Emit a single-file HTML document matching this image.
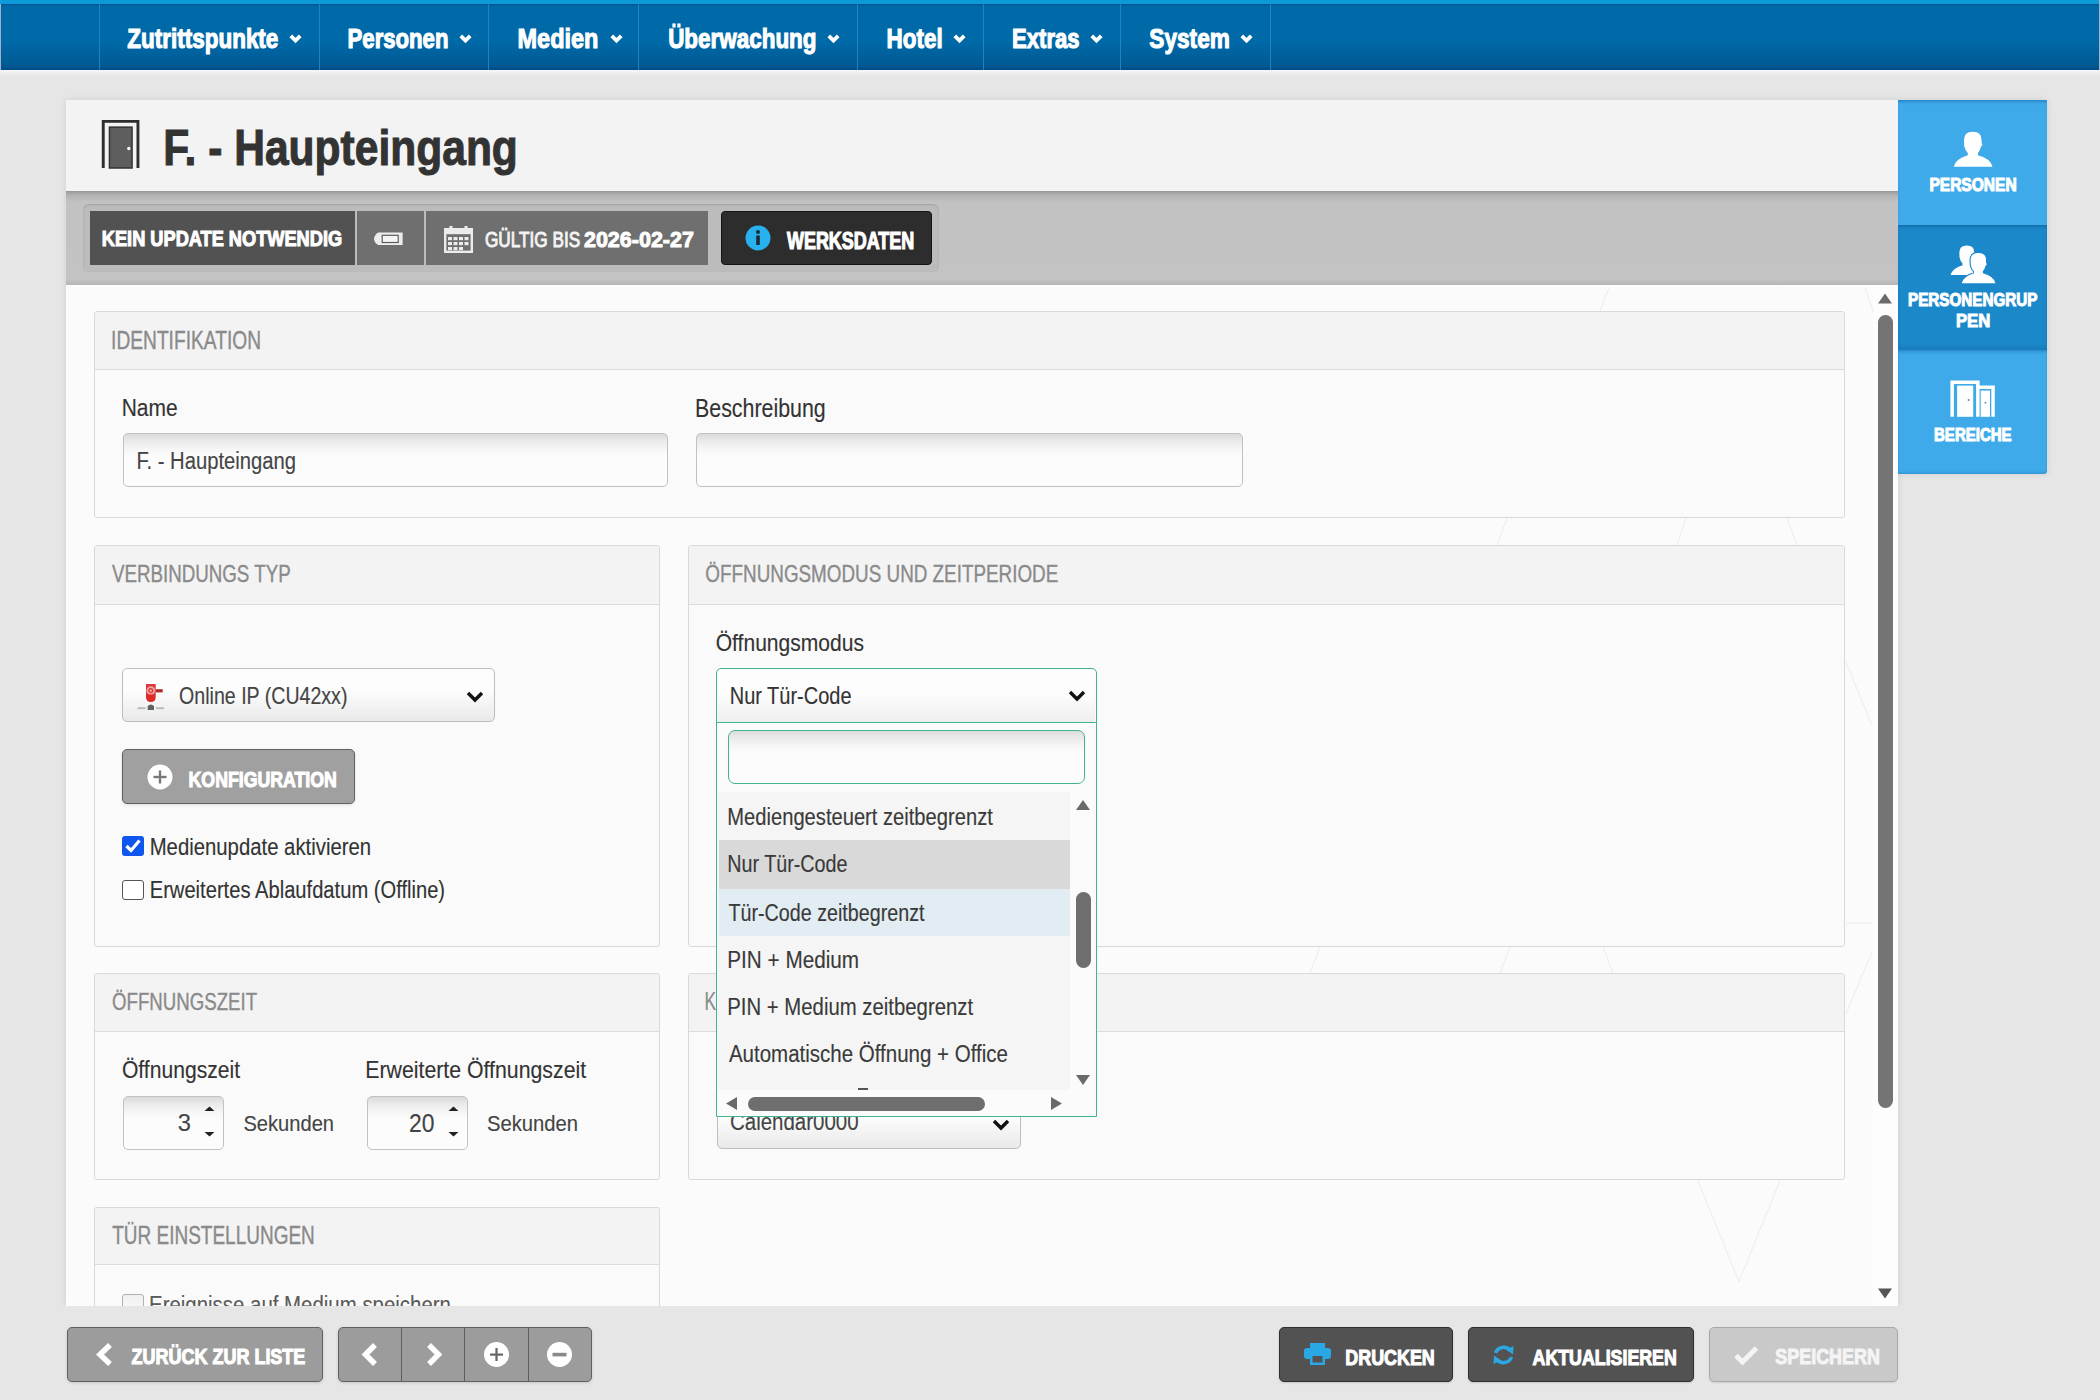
<!DOCTYPE html><html><head><meta charset="utf-8"><style>
html,body{margin:0;padding:0;}
body{width:2100px;height:1400px;position:relative;overflow:hidden;background:#e6e6e6;font-family:"Liberation Sans",sans-serif;}
.t{position:absolute;white-space:nowrap;transform-origin:0 0;}
svg{position:absolute;overflow:visible;}
</style></head><body>
<div style="position:absolute;left:0px;top:0px;width:2100px;height:4px;background:#0d9ad9;"></div>
<div style="position:absolute;left:0px;top:4px;width:2100px;height:66px;background:linear-gradient(#00508c,#006aa8 2px,#0069a7 38px,#005b95 60px,#004c87 66.5px,#00195e 68px,#001a5e);"></div>
<div style="position:absolute;left:2099px;top:0px;width:1px;height:70px;background:#aab2c4;"></div>
<div style="position:absolute;left:0px;top:4px;width:1px;height:66px;background:#9fb0c8;"></div>
<div style="position:absolute;left:0px;top:70px;width:2100px;height:6px;background:linear-gradient(#f7f7f7,#e6e6e6);"></div>
<div style="position:absolute;left:99px;top:4px;width:1px;height:66px;background:#2a8bc8;opacity:.8;"></div>
<div style="position:absolute;left:319px;top:4px;width:1px;height:66px;background:#2a8bc8;opacity:.8;"></div>
<div style="position:absolute;left:488px;top:4px;width:1px;height:66px;background:#2a8bc8;opacity:.8;"></div>
<div style="position:absolute;left:638px;top:4px;width:1px;height:66px;background:#2a8bc8;opacity:.8;"></div>
<div style="position:absolute;left:857px;top:4px;width:1px;height:66px;background:#2a8bc8;opacity:.8;"></div>
<div style="position:absolute;left:983px;top:4px;width:1px;height:66px;background:#2a8bc8;opacity:.8;"></div>
<div style="position:absolute;left:1120px;top:4px;width:1px;height:66px;background:#2a8bc8;opacity:.8;"></div>
<div style="position:absolute;left:1270px;top:4px;width:1px;height:66px;background:#2a8bc8;opacity:.8;"></div>
<svg style="left:120px;top:18px" width="170" height="41"><text transform="translate(7.33,29.50) scale(0.8062,1)" font-size="27.88" font-weight="bold" fill="#fff" stroke="#fff" stroke-width="1.116" style="font-family:&quot;Liberation Sans&quot;,sans-serif;">Zutrittspunkte</text></svg>
<svg style="left:289px;top:34px" width="13" height="10" viewBox="0 0 13 10"><path d="M1.8 1.8 L6.5 6.5 L11.2 1.8" stroke="#fff" stroke-width="3.8" fill="none"/></svg>
<svg style="left:341px;top:18px" width="119" height="41"><text transform="translate(6.56,29.50) scale(0.7949,1)" font-size="27.86" font-weight="bold" fill="#fff" stroke="#fff" stroke-width="1.132" style="font-family:&quot;Liberation Sans&quot;,sans-serif;">Personen</text></svg>
<svg style="left:459px;top:34px" width="13" height="10" viewBox="0 0 13 10"><path d="M1.8 1.8 L6.5 6.5 L11.2 1.8" stroke="#fff" stroke-width="3.8" fill="none"/></svg>
<svg style="left:511px;top:18px" width="99" height="41"><text transform="translate(6.47,29.50) scale(0.8416,1)" font-size="27.95" font-weight="bold" fill="#fff" stroke="#fff" stroke-width="1.069" style="font-family:&quot;Liberation Sans&quot;,sans-serif;">Medien</text></svg>
<svg style="left:609.5px;top:34px" width="13" height="10" viewBox="0 0 13 10"><path d="M1.8 1.8 L6.5 6.5 L11.2 1.8" stroke="#fff" stroke-width="3.8" fill="none"/></svg>
<svg style="left:661px;top:18px" width="166" height="41"><text transform="translate(7.15,29.50) scale(0.8053,1)" font-size="27.88" font-weight="bold" fill="#fff" stroke="#fff" stroke-width="1.118" style="font-family:&quot;Liberation Sans&quot;,sans-serif;">Überwachung</text></svg>
<svg style="left:827px;top:34px" width="13" height="10" viewBox="0 0 13 10"><path d="M1.8 1.8 L6.5 6.5 L11.2 1.8" stroke="#fff" stroke-width="3.8" fill="none"/></svg>
<svg style="left:880px;top:18px" width="74" height="41"><text transform="translate(6.54,29.50) scale(0.8053,1)" font-size="27.88" font-weight="bold" fill="#fff" stroke="#fff" stroke-width="1.118" style="font-family:&quot;Liberation Sans&quot;,sans-serif;">Hotel</text></svg>
<svg style="left:953px;top:34px" width="13" height="10" viewBox="0 0 13 10"><path d="M1.8 1.8 L6.5 6.5 L11.2 1.8" stroke="#fff" stroke-width="3.8" fill="none"/></svg>
<svg style="left:1005px;top:18px" width="86" height="41"><text transform="translate(7.07,29.50) scale(0.7923,1)" font-size="27.85" font-weight="bold" fill="#fff" stroke="#fff" stroke-width="1.136" style="font-family:&quot;Liberation Sans&quot;,sans-serif;">Extras</text></svg>
<svg style="left:1090px;top:34px" width="13" height="10" viewBox="0 0 13 10"><path d="M1.8 1.8 L6.5 6.5 L11.2 1.8" stroke="#fff" stroke-width="3.8" fill="none"/></svg>
<svg style="left:1142px;top:18px" width="99" height="41"><text transform="translate(7.32,29.50) scale(0.8120,1)" font-size="27.89" font-weight="bold" fill="#fff" stroke="#fff" stroke-width="1.108" style="font-family:&quot;Liberation Sans&quot;,sans-serif;">System</text></svg>
<svg style="left:1240px;top:34px" width="13" height="10" viewBox="0 0 13 10"><path d="M1.8 1.8 L6.5 6.5 L11.2 1.8" stroke="#fff" stroke-width="3.8" fill="none"/></svg>
<div style="position:absolute;left:66px;top:100px;width:1832px;height:1206px;box-shadow:0 0 7px rgba(0,0,0,.10);"></div>
<div style="position:absolute;left:1898px;top:100px;width:149px;height:374px;box-shadow:0 0 7px rgba(0,0,0,.10);"></div>
<div style="position:absolute;left:66px;top:100px;width:1832px;height:91px;background:#f3f3f3;"></div>
<div style="position:absolute;left:66px;top:191px;width:1832px;height:94px;background:linear-gradient(#979797,#b2b2b2 4px,#c2c2c2 11px,#c3c3c3 88px,#b6b6b6 94px);"></div>
<div style="position:absolute;left:66px;top:285px;width:1832px;height:1021px;background:#fbfbfb;"></div>
<div style="position:absolute;left:1873px;top:285px;width:25px;height:1021px;background:#fdfdfd;"></div>
<svg style="left:0;top:0" width="2100" height="1400"><line x1="1608.6" y1="288.6" x2="1600" y2="311" stroke="#ececec" stroke-width="1"/><line x1="1865" y1="288" x2="1873" y2="311" stroke="#ececec" stroke-width="1"/><line x1="1507" y1="518" x2="1497" y2="545" stroke="#ececec" stroke-width="1"/><line x1="1686" y1="518" x2="1677" y2="545" stroke="#ececec" stroke-width="1"/><line x1="1787" y1="518" x2="1797" y2="545" stroke="#ececec" stroke-width="1"/><line x1="1846" y1="662.5" x2="1872" y2="725" stroke="#ececec" stroke-width="1"/><line x1="1846" y1="923" x2="1872" y2="923" stroke="#ececec" stroke-width="1"/><line x1="1846" y1="1014" x2="1872" y2="952" stroke="#ececec" stroke-width="1"/><line x1="1320" y1="947" x2="1310" y2="973" stroke="#ececec" stroke-width="1"/><line x1="1510" y1="947" x2="1500" y2="973" stroke="#ececec" stroke-width="1"/><line x1="1603" y1="947" x2="1613" y2="973" stroke="#ececec" stroke-width="1"/><line x1="1697.6" y1="1180" x2="1739" y2="1281.7" stroke="#ececec" stroke-width="1"/><line x1="1739" y1="1281.7" x2="1780.2" y2="1180" stroke="#ececec" stroke-width="1"/></svg>
<svg style="left:100px;top:119px" width="42" height="50" viewBox="0 0 42 50"><path d="M3.25 49 V2.35 H37.95 V49" stroke="#2e2e2e" stroke-width="2.9" fill="none"/><rect x="9.45" y="8.15" width="22.6" height="40.85" fill="#5e5e5e" stroke="#333" stroke-width="1.5"/><circle cx="28.8" cy="29.5" r="1.7" fill="#f4f4f4"/></svg>
<svg style="left:158px;top:112px" width="370" height="75"><text transform="translate(5.23,53.00) scale(0.8504,1)" font-size="50.06" font-weight="bold" fill="#333" stroke="#333" stroke-width="1.058" style="font-family:&quot;Liberation Sans&quot;,sans-serif;">F. - Haupteingang</text></svg>
<div style="position:absolute;left:83px;top:204px;width:856px;height:68px;border-radius:6px;background:#bcbcbc;box-shadow:inset 0 1px 2px rgba(0,0,0,.15);"></div>
<div style="position:absolute;left:90px;top:211px;width:265px;height:54px;background:#525252;"></div>
<div style="position:absolute;left:357px;top:211px;width:67px;height:54px;background:#6f6f6f;"></div>
<div style="position:absolute;left:426px;top:211px;width:282px;height:54px;background:#6f6f6f;"></div>
<div style="position:absolute;left:721px;top:211px;width:211px;height:54px;box-sizing:border-box;border:1px solid #141414;background:#2d2d2d;border-radius:4px;"></div>
<svg style="left:95px;top:222px" width="259" height="34"><text transform="translate(6.82,24.20) scale(0.7993,1)" font-size="22.78" font-weight="bold" fill="#fff" stroke="#fff" stroke-width="1.126" style="font-family:&quot;Liberation Sans&quot;,sans-serif;">KEIN UPDATE NOTWENDIG</text></svg>
<svg style="left:373px;top:232px" width="31" height="15" viewBox="0 0 31 15"><path d="M1 6.9 Q1.3 3.2 5.2 0.6 H29.6 V13.1 H5.2 Q1.3 10.6 1 6.9 Z" fill="#ececec"/><rect x="9.2" y="3.3" width="16" height="7.2" fill="#f4f4f4" stroke="#5a5a5a" stroke-width="1.2"/></svg>
<svg style="left:444px;top:226px" width="29" height="27" viewBox="0 0 29 27"><rect x="1.2" y="3.2" width="26.6" height="22.6" fill="none" stroke="#ececec" stroke-width="2.4"/><rect x="1.2" y="3.2" width="26.6" height="5" fill="#ececec"/><rect x="5.5" y="0" width="3" height="5" fill="#ececec"/><rect x="20.5" y="0" width="3" height="5" fill="#ececec"/><rect x="4.0" y="11" width="4" height="3.2" fill="#ececec"/><rect x="9.5" y="11" width="4" height="3.2" fill="#ececec"/><rect x="15.0" y="11" width="4" height="3.2" fill="#ececec"/><rect x="20.5" y="11" width="4" height="3.2" fill="#ececec"/><rect x="4.0" y="16" width="4" height="3.2" fill="#ececec"/><rect x="9.5" y="16" width="4" height="3.2" fill="#ececec"/><rect x="15.0" y="16" width="4" height="3.2" fill="#ececec"/><rect x="20.5" y="16" width="4" height="3.2" fill="#ececec"/><rect x="4.0" y="21" width="4" height="3.2" fill="#ececec"/><rect x="9.5" y="21" width="4" height="3.2" fill="#ececec"/><rect x="15.0" y="21" width="4" height="3.2" fill="#ececec"/></svg>
<svg style="left:477px;top:222px" width="114" height="34"><text transform="translate(7.94,24.80) scale(0.7587,1)" font-size="22.69" font-weight="normal" fill="#f4f4f4" stroke="#f4f4f4" stroke-width="0.989" style="font-family:&quot;Liberation Sans&quot;,sans-serif;">GÜLTIG BIS</text></svg>
<svg style="left:576px;top:222px" width="129" height="34"><text transform="translate(7.95,24.80) scale(0.9456,1)" font-size="22.74" font-weight="bold" fill="#fff" stroke="#fff" stroke-width="0.952" style="font-family:&quot;Liberation Sans&quot;,sans-serif;">2026-02-27</text></svg>
<svg style="left:745px;top:225px" width="26" height="26" viewBox="0 0 26 26"><circle cx="13" cy="13" r="12.5" fill="#27b1ee"/><rect x="11.2" y="10.5" width="3.6" height="9.5" fill="#1e2b36"/><circle cx="13" cy="7" r="2" fill="#1e2b36"/></svg>
<svg style="left:779px;top:223px" width="147" height="35"><text transform="translate(8.00,25.50) scale(0.7571,1)" font-size="23.71" font-weight="bold" fill="#fff" stroke="#fff" stroke-width="1.189" style="font-family:&quot;Liberation Sans&quot;,sans-serif;">WERKSDATEN</text></svg>
<div style="position:absolute;left:1898px;top:100px;width:149px;height:125px;background:#3eaaea;box-shadow:inset 0 3px 3px -1px rgba(0,70,150,.35);"></div>
<div style="position:absolute;left:1898px;top:225px;width:149px;height:125px;background:#1b88ca;box-shadow:inset 0 3px 3px -1px rgba(0,50,110,.3), inset 0 -5px 5px -3px rgba(0,40,90,.18);"></div>
<div style="position:absolute;left:1898px;top:350px;width:149px;height:124px;background:#3eaaea;border-bottom-right-radius:3px;box-shadow:inset 0 3px 3px -1px rgba(0,70,150,.3), inset 0 -3px 3px -2px rgba(0,60,130,.25);"></div>
<svg style="left:1953px;top:131px" width="40" height="36" viewBox="0 0 40 36"><path d="M11 9 Q11 0.8 19.8 0.8 Q28.6 0.8 28.6 9 L28.6 12 Q29.8 13 29.2 14.6 L28.2 15.2 Q27 19.5 25 22 L25 24.2 Q37.5 27.5 39.5 35.7 L0.7 35.7 Q3 27.5 14.8 24.2 L14.8 22 Q12.2 19.5 11.2 15 Z" fill="#fff"/></svg>
<svg style="left:1922px;top:170px" width="106" height="28"><text transform="translate(7.39,20.70) scale(0.8234,1)" font-size="18.90" font-weight="bold" fill="#fff" stroke="#fff" stroke-width="1.093" style="font-family:&quot;Liberation Sans&quot;,sans-serif;">PERSONEN</text></svg>
<svg style="left:1945px;top:238px" width="56" height="52" viewBox="0 0 56 52"><path transform="translate(5,6.7) scale(0.85)" d="M11 9 Q11 0.8 19.8 0.8 Q28.6 0.8 28.6 9 L28.6 12 Q29.8 13 29.2 14.6 L28.2 15.2 Q27 19.5 25 22 L25 24.2 Q37.5 27.5 39.5 35.7 L0.7 35.7 Q3 27.5 14.8 24.2 L14.8 22 Q12.2 19.5 11.2 15 Z" fill="#fff"/><path transform="translate(16.1,14.2) scale(0.87)" d="M11 9 Q11 0.8 19.8 0.8 Q28.6 0.8 28.6 9 L28.6 12 Q29.8 13 29.2 14.6 L28.2 15.2 Q27 19.5 25 22 L25 24.2 Q37.5 27.5 39.5 35.7 L0.7 35.7 Q3 27.5 14.8 24.2 L14.8 22 Q12.2 19.5 11.2 15 Z" fill="#fff" stroke="#1b88cf" stroke-width="2.6"/><path transform="translate(16.1,14.2) scale(0.87)" d="M11 9 Q11 0.8 19.8 0.8 Q28.6 0.8 28.6 9 L28.6 12 Q29.8 13 29.2 14.6 L28.2 15.2 Q27 19.5 25 22 L25 24.2 Q37.5 27.5 39.5 35.7 L0.7 35.7 Q3 27.5 14.8 24.2 L14.8 22 Q12.2 19.5 11.2 15 Z" fill="#fff"/></svg>
<svg style="left:1901px;top:287px" width="149" height="27"><text transform="translate(7.01,19.40) scale(0.8434,1)" font-size="18.07" font-weight="bold" fill="#fff" stroke="#fff" stroke-width="1.067" style="font-family:&quot;Liberation Sans&quot;,sans-serif;">PERSONENGRUP</text></svg>
<svg style="left:1949px;top:307px" width="53" height="27"><text transform="translate(6.92,20.00) scale(0.9165,1)" font-size="18.19" font-weight="bold" fill="#fff" stroke="#fff" stroke-width="0.982" style="font-family:&quot;Liberation Sans&quot;,sans-serif;">PEN</text></svg>
<svg style="left:1945px;top:372px" width="56" height="50" viewBox="0 0 56 50"><path d="M7.15 44.8 V10.15 H32.85 V44.8" fill="none" stroke="#fff" stroke-width="3.5"/><rect x="12.1" y="13.6" width="16.1" height="31.2" fill="#fff"/><path d="M32.85 15.2 H48.05 V44.8" fill="none" stroke="#fff" stroke-width="3.5"/><rect x="35.7" y="18.6" width="9.3" height="26.2" fill="#fff"/><circle cx="23.6" cy="27.9" r="1" fill="#4a8fcc"/><circle cx="40.4" cy="30.7" r="0.9" fill="#4a8fcc"/></svg>
<svg style="left:1927px;top:421px" width="97" height="27"><text transform="translate(7.02,19.80) scale(0.8324,1)" font-size="18.05" font-weight="bold" fill="#fff" stroke="#fff" stroke-width="1.081" style="font-family:&quot;Liberation Sans&quot;,sans-serif;">BEREICHE</text></svg>
<div style="position:absolute;left:94px;top:311px;width:1751px;height:207px;box-sizing:border-box;border:1px solid #d9d9d9;border-radius:3px;background:#fafafa;overflow:hidden;"><div style="position:absolute;left:0;top:0;right:0;height:57px;background:#f3f3f3;border-bottom:1px solid #dcdcdc;"></div></div>
<div style="position:absolute;left:94px;top:545px;width:566px;height:402px;box-sizing:border-box;border:1px solid #d9d9d9;border-radius:3px;background:#fafafa;overflow:hidden;"><div style="position:absolute;left:0;top:0;right:0;height:58px;background:#f3f3f3;border-bottom:1px solid #dcdcdc;"></div></div>
<div style="position:absolute;left:688px;top:545px;width:1157px;height:402px;box-sizing:border-box;border:1px solid #d9d9d9;border-radius:3px;background:#fafafa;overflow:hidden;"><div style="position:absolute;left:0;top:0;right:0;height:58px;background:#f3f3f3;border-bottom:1px solid #dcdcdc;"></div></div>
<div style="position:absolute;left:94px;top:973px;width:566px;height:207px;box-sizing:border-box;border:1px solid #d9d9d9;border-radius:3px;background:#fafafa;overflow:hidden;"><div style="position:absolute;left:0;top:0;right:0;height:57px;background:#f3f3f3;border-bottom:1px solid #dcdcdc;"></div></div>
<div style="position:absolute;left:688px;top:973px;width:1157px;height:207px;box-sizing:border-box;border:1px solid #d9d9d9;border-radius:3px;background:#fafafa;overflow:hidden;"><div style="position:absolute;left:0;top:0;right:0;height:57px;background:#f3f3f3;border-bottom:1px solid #dcdcdc;"></div></div>
<div style="position:absolute;left:94px;top:1207px;width:566px;height:123px;box-sizing:border-box;border:1px solid #d9d9d9;border-radius:3px;background:#fafafa;overflow:hidden;border-bottom:none;"><div style="position:absolute;left:0;top:0;right:0;height:56px;background:#f3f3f3;border-bottom:1px solid #dcdcdc;"></div></div>
<svg style="left:104px;top:321px" width="167" height="38"><text transform="translate(7.07,27.50) scale(0.7491,1)" font-size="25.62" font-weight="normal" fill="#8a8a8a" stroke="#8a8a8a" stroke-width="0.374" style="font-family:&quot;Liberation Sans&quot;,sans-serif;">IDENTIFIKATION</text></svg>
<svg style="left:104px;top:556px" width="198" height="36"><text transform="translate(7.91,25.90) scale(0.7798,1)" font-size="24.04" font-weight="normal" fill="#8a8a8a" stroke="#8a8a8a" stroke-width="0.359" style="font-family:&quot;Liberation Sans&quot;,sans-serif;">VERBINDUNGS TYP</text></svg>
<svg style="left:698px;top:555px" width="372" height="36"><text transform="translate(7.35,26.50) scale(0.7668,1)" font-size="24.61" font-weight="normal" fill="#8a8a8a" stroke="#8a8a8a" stroke-width="0.365" style="font-family:&quot;Liberation Sans&quot;,sans-serif;">ÖFFNUNGSMODUS UND ZEITPERIODE</text></svg>
<svg style="left:104px;top:985px" width="164" height="35"><text transform="translate(8.06,25.00) scale(0.7953,1)" font-size="23.47" font-weight="normal" fill="#8a8a8a" stroke="#8a8a8a" stroke-width="0.352" style="font-family:&quot;Liberation Sans&quot;,sans-serif;">ÖFFNUNGSZEIT</text></svg>
<svg style="left:698px;top:983px" width="30" height="37"><text transform="translate(6.61,27.00) scale(0.6957,1)" font-size="25.00" font-weight="normal" fill="#8a8a8a" stroke="#8a8a8a" stroke-width="0.172" style="font-family:&quot;Liberation Sans&quot;,sans-serif;">K</text></svg>
<svg style="left:104px;top:1217px" width="221" height="37"><text transform="translate(8.22,27.10) scale(0.7543,1)" font-size="25.19" font-weight="normal" fill="#8a8a8a" stroke="#8a8a8a" stroke-width="0.371" style="font-family:&quot;Liberation Sans&quot;,sans-serif;">TÜR EINSTELLUNGEN</text></svg>
<svg style="left:115px;top:390px" width="73" height="35"><text transform="translate(6.72,26.00) scale(0.8766,1)" font-size="23.93" font-weight="normal" fill="#333" stroke="#333" stroke-width="0.137" style="font-family:&quot;Liberation Sans&quot;,sans-serif;">Name</text></svg>
<svg style="left:688px;top:390px" width="147" height="37"><text transform="translate(6.99,26.50) scale(0.8575,1)" font-size="24.94" font-weight="normal" fill="#333" stroke="#333" stroke-width="0.140" style="font-family:&quot;Liberation Sans&quot;,sans-serif;">Beschreibung</text></svg>
<div style="position:absolute;left:123px;top:433px;width:545px;height:54px;box-sizing:border-box;border:1px solid #c2c2c2;border-radius:5px;background:linear-gradient(#dcdcdc 1px,#ececec 8px,#f8f8f8 17px,#fcfcfc 24px);"></div>
<div style="position:absolute;left:696px;top:433px;width:547px;height:54px;box-sizing:border-box;border:1px solid #c2c2c2;border-radius:5px;background:linear-gradient(#dcdcdc 1px,#ececec 8px,#f8f8f8 17px,#fcfcfc 24px);"></div>
<svg style="left:130px;top:443px" width="177" height="36"><text transform="translate(6.38,26.20) scale(0.8361,1)" font-size="24.21" font-weight="normal" fill="#444" stroke="#444" stroke-width="0.144" style="font-family:&quot;Liberation Sans&quot;,sans-serif;">F. - Haupteingang</text></svg>
<div style="position:absolute;left:122px;top:668px;width:373px;height:54px;box-sizing:border-box;border:1px solid #bdbdbd;border-radius:5px;background:linear-gradient(#fdfdfd 40%,#e9e9e9);"></div>
<svg style="left:137px;top:683px" width="28" height="28" viewBox="0 0 28 28"><path d="M9 1 H18.7 V12 H9 Z" fill="#d83a3a"/><circle cx="13.8" cy="7.6" r="3.4" fill="none" stroke="#f6a0a0" stroke-width="1.8"/><circle cx="13.8" cy="7.6" r="1.2" fill="#f3b0b0"/><rect x="18.7" y="6.2" width="7" height="3.2" fill="#b02828"/><path d="M9 11.5 H18.7 V14 Q18.7 19 13.85 19 Q9 19 9 14 Z" fill="#df2a2a"/><path d="M10.7 23 Q13.8 20 17 23 V27 H10.7 Z" fill="#5d6262"/><rect x="0.5" y="24.2" width="8" height="2" fill="#b8bcbc"/><rect x="19" y="24.2" width="8" height="2" fill="#b8bcbc"/></svg>
<svg style="left:172px;top:677px" width="186" height="37"><text transform="translate(7.12,26.60) scale(0.7904,1)" font-size="24.78" font-weight="normal" fill="#444" stroke="#444" stroke-width="0.152" style="font-family:&quot;Liberation Sans&quot;,sans-serif;">Online IP (CU42xx)</text></svg>
<svg style="left:466px;top:691px" width="18" height="12" viewBox="0 0 18 12"><path d="M2 2 L9 9 L16 2" stroke="#111" stroke-width="3.4" fill="none"/></svg>
<div style="position:absolute;left:122px;top:749px;width:233px;height:55px;box-sizing:border-box;border:1.3px solid #616161;border-radius:5px;background:#a0a0a0;box-shadow:0 1px 3px rgba(0,0,0,.12);"></div>
<svg style="left:147px;top:764px" width="26" height="26" viewBox="0 0 26 26"><circle cx="13" cy="13" r="12.5" fill="#fff"/><rect x="6.5" y="11.8" width="13" height="2.4" fill="#777"/><rect x="11.8" y="6.5" width="2.4" height="13" fill="#777"/></svg>
<svg style="left:181px;top:764px" width="167" height="32"><text transform="translate(7.55,22.70) scale(0.8238,1)" font-size="21.52" font-weight="bold" fill="#fff" stroke="#fff" stroke-width="1.092" style="font-family:&quot;Liberation Sans&quot;,sans-serif;">KONFIGURATION</text></svg>
<div style="position:absolute;left:122px;top:836px;width:22px;height:20px;background:#0f56ee;border-radius:3px;"></div>
<svg style="left:122px;top:836px" width="22" height="20" viewBox="0 0 22 20"><path d="M4.5 10 L9 14.5 L17.5 4.5" stroke="#fff" stroke-width="3.2" fill="none"/></svg>
<svg style="left:143px;top:829px" width="238" height="35"><text transform="translate(6.67,25.70) scale(0.8603,1)" font-size="23.63" font-weight="normal" fill="#333" stroke="#333" stroke-width="0.139" style="font-family:&quot;Liberation Sans&quot;,sans-serif;">Medienupdate aktivieren</text></svg>
<div style="position:absolute;left:122px;top:880px;width:22px;height:20px;box-sizing:border-box;border:1.5px solid #555;border-radius:3px;background:#fff;"></div>
<svg style="left:143px;top:872px" width="312" height="35"><text transform="translate(6.69,25.50) scale(0.8643,1)" font-size="23.34" font-weight="normal" fill="#333" stroke="#333" stroke-width="0.139" style="font-family:&quot;Liberation Sans&quot;,sans-serif;">Erweitertes Ablaufdatum (Offline)</text></svg>
<svg style="left:708px;top:626px" width="166" height="35"><text transform="translate(7.75,25.00) scale(0.8848,1)" font-size="23.79" font-weight="normal" fill="#333" stroke="#333" stroke-width="0.136" style="font-family:&quot;Liberation Sans&quot;,sans-serif;">Öffnungsmodus</text></svg>
<svg style="left:114px;top:1053px" width="137" height="35"><text transform="translate(7.95,25.30) scale(0.8978,1)" font-size="23.50" font-weight="normal" fill="#333" stroke="#333" stroke-width="0.134" style="font-family:&quot;Liberation Sans&quot;,sans-serif;">Öffnungszeit</text></svg>
<svg style="left:359px;top:1053px" width="239" height="34"><text transform="translate(6.30,25.10) scale(0.9230,1)" font-size="23.07" font-weight="normal" fill="#333" stroke="#333" stroke-width="0.130" style="font-family:&quot;Liberation Sans&quot;,sans-serif;">Erweiterte Öffnungszeit</text></svg>
<div style="position:absolute;left:123px;top:1096px;width:101px;height:54px;box-sizing:border-box;border:1px solid #c2c2c2;border-radius:5px;background:linear-gradient(#dcdcdc 1px,#ececec 8px,#f8f8f8 17px,#fcfcfc 24px);"></div>
<div style="position:absolute;left:367px;top:1096px;width:101px;height:54px;box-sizing:border-box;border:1px solid #c2c2c2;border-radius:5px;background:linear-gradient(#dcdcdc 1px,#ececec 8px,#f8f8f8 17px,#fcfcfc 24px);"></div>
<svg style="left:170px;top:1106px" width="31" height="35"><text transform="translate(7.65,25.40) scale(1.0035,1)" font-size="23.66" font-weight="normal" fill="#444" stroke="#444" stroke-width="0.120" style="font-family:&quot;Liberation Sans&quot;,sans-serif;">3</text></svg>
<svg style="left:402px;top:1105px" width="43" height="37"><text transform="translate(7.05,27.20) scale(0.9074,1)" font-size="25.24" font-weight="normal" fill="#444" stroke="#444" stroke-width="0.132" style="font-family:&quot;Liberation Sans&quot;,sans-serif;">20</text></svg>
<svg style="left:203.5px;top:1106px" width="11" height="32" viewBox="0 0 11 32"><path d="M0.5 5 L5.5 0.5 L10.5 5 Z" fill="#222"/><path d="M0.5 26 L5.5 30.5 L10.5 26 Z" fill="#222"/></svg>
<svg style="left:447.5px;top:1106px" width="11" height="32" viewBox="0 0 11 32"><path d="M0.5 5 L5.5 0.5 L10.5 5 Z" fill="#222"/><path d="M0.5 26 L5.5 30.5 L10.5 26 Z" fill="#222"/></svg>
<svg style="left:236px;top:1107px" width="108" height="33"><text transform="translate(7.39,24.40) scale(0.8899,1)" font-size="22.62" font-weight="normal" fill="#444" stroke="#444" stroke-width="0.135" style="font-family:&quot;Liberation Sans&quot;,sans-serif;">Sekunden</text></svg>
<svg style="left:479px;top:1107px" width="109" height="33"><text transform="translate(7.99,24.40) scale(0.8948,1)" font-size="22.62" font-weight="normal" fill="#444" stroke="#444" stroke-width="0.134" style="font-family:&quot;Liberation Sans&quot;,sans-serif;">Sekunden</text></svg>
<div style="position:absolute;left:717px;top:1095px;width:304px;height:54px;box-sizing:border-box;border:1px solid #bdbdbd;border-radius:5px;background:linear-gradient(#fdfdfd 40%,#e9e9e9);"></div>
<svg style="left:723px;top:1105px" width="147" height="35"><text transform="translate(6.98,25.00) scale(0.8613,1)" font-size="23.78" font-weight="normal" fill="#444" stroke="#444" stroke-width="0.139" style="font-family:&quot;Liberation Sans&quot;,sans-serif;">Calendar0000</text></svg>
<svg style="left:992px;top:1119px" width="18" height="12" viewBox="0 0 18 12"><path d="M2 2 L9 9 L16 2" stroke="#111" stroke-width="3.4" fill="none"/></svg>
<div style="position:absolute;left:122px;top:1294px;width:22px;height:20px;box-sizing:border-box;border:1.5px solid #b0b0b0;border-radius:3px;background:linear-gradient(#f0f0f0,#fafafa);"></div>
<svg style="left:142px;top:1287px" width="319" height="35"><text transform="translate(7.07,25.50) scale(0.8588,1)" font-size="23.78" font-weight="normal" fill="#5a5a5a" stroke="#5a5a5a" stroke-width="0.140" style="font-family:&quot;Liberation Sans&quot;,sans-serif;">Ereignisse auf Medium speichern</text></svg>
<div style="position:absolute;left:716px;top:668px;width:381px;height:449px;box-sizing:border-box;border:1.6px solid #42b394;border-radius:5px 5px 0 0;background:#fbfbfb;"></div>
<div style="position:absolute;left:718px;top:670px;width:377px;height:51.5px;border-radius:3px 3px 0 0;background:linear-gradient(#fdfdfd 45%,#eeeeee);"></div>
<div style="position:absolute;left:716px;top:721.5px;width:381px;height:1.7000000000000455px;background:#42b394;"></div>
<svg style="left:723px;top:678px" width="139" height="35"><text transform="translate(6.70,25.80) scale(0.8411,1)" font-size="23.78" font-weight="normal" fill="#333" stroke="#333" stroke-width="0.143" style="font-family:&quot;Liberation Sans&quot;,sans-serif;">Nur Tür-Code</text></svg>
<svg style="left:1068px;top:690px" width="18" height="12" viewBox="0 0 18 12"><path d="M2 2 L9 9 L16 2" stroke="#111" stroke-width="3.4" fill="none"/></svg>
<div style="position:absolute;left:728px;top:730px;width:357px;height:54px;box-sizing:border-box;border:1.8px solid #42b394;border-radius:7px;background:linear-gradient(#dedede 1px,#ececec 8px,#f8f8f8 17px,#fcfcfc 24px);"></div>
<div style="position:absolute;left:718px;top:792px;width:352px;height:298px;background:#f5f5f5;"></div>
<div style="position:absolute;left:719px;top:840px;width:351px;height:48.5px;background:#d9d9d9;"></div>
<div style="position:absolute;left:719px;top:888.5px;width:351px;height:47.0px;background:#e1edf3;"></div>
<svg style="left:720px;top:800px" width="284" height="35"><text transform="translate(7.29,25.30) scale(0.8430,1)" font-size="23.92" font-weight="normal" fill="#3a3a3a" stroke="#3a3a3a" stroke-width="0.142" style="font-family:&quot;Liberation Sans&quot;,sans-serif;">Mediengesteuert zeitbegrenzt</text></svg>
<svg style="left:720px;top:846px" width="137" height="35"><text transform="translate(7.32,25.60) scale(0.8249,1)" font-size="23.92" font-weight="normal" fill="#3a3a3a" stroke="#3a3a3a" stroke-width="0.145" style="font-family:&quot;Liberation Sans&quot;,sans-serif;">Nur Tür-Code</text></svg>
<svg style="left:720px;top:895px" width="215" height="35"><text transform="translate(8.51,26.00) scale(0.8239,1)" font-size="23.92" font-weight="normal" fill="#3a3a3a" stroke="#3a3a3a" stroke-width="0.146" style="font-family:&quot;Liberation Sans&quot;,sans-serif;">Tür-Code zeitbegrenzt</text></svg>
<svg style="left:720px;top:942px" width="149" height="35"><text transform="translate(7.24,25.90) scale(0.8667,1)" font-size="23.93" font-weight="normal" fill="#3a3a3a" stroke="#3a3a3a" stroke-width="0.138" style="font-family:&quot;Liberation Sans&quot;,sans-serif;">PIN + Medium</text></svg>
<svg style="left:720px;top:989px" width="264" height="35"><text transform="translate(7.27,25.70) scale(0.8509,1)" font-size="23.92" font-weight="normal" fill="#3a3a3a" stroke="#3a3a3a" stroke-width="0.141" style="font-family:&quot;Liberation Sans&quot;,sans-serif;">PIN + Medium zeitbegrenzt</text></svg>
<svg style="left:720px;top:1036px" width="298" height="35"><text transform="translate(8.90,26.00) scale(0.8581,1)" font-size="23.92" font-weight="normal" fill="#3a3a3a" stroke="#3a3a3a" stroke-width="0.140" style="font-family:&quot;Liberation Sans&quot;,sans-serif;">Automatische Öffnung + Office</text></svg>
<div style="position:absolute;left:858px;top:1088px;width:10px;height:2px;background:#555;"></div>
<svg style="left:1075px;top:799px" width="16" height="12" viewBox="0 0 16 12"><path d="M1 11 L8 1 L15 11 Z" fill="#6a6a6a"/></svg>
<div style="position:absolute;left:1076px;top:892px;width:15px;height:76px;background:#6e6e6e;border-radius:7.5px;"></div>
<svg style="left:1075px;top:1074px" width="16" height="12" viewBox="0 0 16 12"><path d="M1 1 L8 11 L15 1 Z" fill="#6a6a6a"/></svg>
<svg style="left:725px;top:1096px" width="13" height="15" viewBox="0 0 13 15"><path d="M12 1 L1 7.5 L12 14 Z" fill="#6a6a6a"/></svg>
<div style="position:absolute;left:748px;top:1097px;width:237px;height:14px;background:#6e6e6e;border-radius:7px;"></div>
<svg style="left:1050px;top:1096px" width="13" height="15" viewBox="0 0 13 15"><path d="M1 1 L12 7.5 L1 14 Z" fill="#6a6a6a"/></svg>
<svg style="left:1877px;top:293px" width="16" height="11" viewBox="0 0 16 11"><path d="M1 10.5 L8 0.5 L15 10.5 Z" fill="#6a6a6a"/></svg>
<div style="position:absolute;left:1877.5px;top:314.5px;width:15.5px;height:793.5px;background:#747474;border-radius:8px;"></div>
<svg style="left:1877px;top:1288px" width="16" height="11" viewBox="0 0 16 11"><path d="M1 0.5 L8 10.5 L15 0.5 Z" fill="#555"/></svg>
<div style="position:absolute;left:0px;top:1306px;width:2100px;height:94px;background:#e6e6e6;"></div>
<div style="position:absolute;left:67px;top:1327px;width:256px;height:55px;box-sizing:border-box;border:1.3px solid #616161;border-radius:5px;background:#9c9c9c;box-shadow:0 1px 3px rgba(0,0,0,.15);"></div>
<svg style="left:94px;top:1342px" width="19" height="25" viewBox="0 0 19 25"><path d="M16 3 L6 12.5 L16 22" stroke="#fff" stroke-width="5.5" fill="none"/></svg>
<svg style="left:124px;top:1340px" width="193" height="33"><text transform="translate(7.56,24.30) scale(0.8096,1)" font-size="22.22" font-weight="bold" fill="#fff" stroke="#fff" stroke-width="1.112" style="font-family:&quot;Liberation Sans&quot;,sans-serif;">ZURÜCK ZUR LISTE</text></svg>
<div style="position:absolute;left:338px;top:1327px;width:254px;height:55px;box-sizing:border-box;border:1.3px solid #616161;border-radius:5px;background:#9c9c9c;box-shadow:0 1px 3px rgba(0,0,0,.15);"></div>
<div style="position:absolute;left:400.5px;top:1328px;width:1.1999999999999886px;height:53px;background:#5e5e5e;"></div>
<div style="position:absolute;left:463.5px;top:1328px;width:1.1999999999999886px;height:53px;background:#5e5e5e;"></div>
<div style="position:absolute;left:528px;top:1328px;width:1.2000000000000455px;height:53px;background:#5e5e5e;"></div>
<svg style="left:360px;top:1342px" width="19" height="25" viewBox="0 0 19 25"><path d="M15 3 L5.5 12.5 L15 22" stroke="#fff" stroke-width="5.5" fill="none"/></svg>
<svg style="left:425px;top:1342px" width="19" height="25" viewBox="0 0 19 25"><path d="M4 3 L13.5 12.5 L4 22" stroke="#fff" stroke-width="5.5" fill="none"/></svg>
<svg style="left:484px;top:1342px" width="26" height="26" viewBox="0 0 26 26"><circle cx="12.5" cy="12.5" r="12.5" fill="#fff"/><rect x="6" y="11.5" width="13" height="2.2" fill="#666"/><rect x="11.4" y="6" width="2.2" height="13" fill="#666"/></svg>
<svg style="left:547px;top:1342px" width="26" height="26" viewBox="0 0 26 26"><circle cx="12.5" cy="12.5" r="12.5" fill="#fff"/><rect x="5.5" y="10.8" width="14" height="3.6" fill="#8a8a8a"/></svg>
<div style="position:absolute;left:1279px;top:1327px;width:174px;height:55px;box-sizing:border-box;border:1px solid #2f2f2f;border-radius:5px;background:#525252;box-shadow:0 1px 2px rgba(0,0,0,.15);"></div>
<svg style="left:1304px;top:1343px" width="27" height="22" viewBox="0 0 27 22"><rect x="6" y="0" width="15" height="6" fill="#2aa8e4"/><rect x="0" y="5" width="27" height="11" rx="3" fill="#2aa8e4"/><rect x="6" y="11" width="15" height="11" fill="#2aa8e4"/><rect x="8.5" y="13" width="10" height="6.5" fill="#525252"/></svg>
<svg style="left:1338px;top:1341px" width="108" height="33"><text transform="translate(7.34,23.70) scale(0.8003,1)" font-size="22.35" font-weight="bold" fill="#fff" stroke="#fff" stroke-width="1.125" style="font-family:&quot;Liberation Sans&quot;,sans-serif;">DRUCKEN</text></svg>
<div style="position:absolute;left:1468px;top:1327px;width:226px;height:55px;box-sizing:border-box;border:1px solid #2f2f2f;border-radius:5px;background:#525252;box-shadow:0 1px 2px rgba(0,0,0,.15);"></div>
<svg style="left:1491px;top:1344px" width="25" height="22" viewBox="0 0 25 22"><path d="M4.5 9 A8.5 8.5 0 0 1 19.5 7" stroke="#2aa8e4" stroke-width="3.5" fill="none"/><path d="M15 5.5 L22.5 2 L22 10.5 Z" fill="#2aa8e4"/><path d="M20.5 13 A8.5 8.5 0 0 1 5.5 15" stroke="#2aa8e4" stroke-width="3.5" fill="none"/><path d="M10 16.5 L2.5 20 L3 11.5 Z" fill="#2aa8e4"/></svg>
<svg style="left:1525px;top:1341px" width="163" height="33"><text transform="translate(7.56,23.70) scale(0.7960,1)" font-size="22.34" font-weight="bold" fill="#fff" stroke="#fff" stroke-width="1.131" style="font-family:&quot;Liberation Sans&quot;,sans-serif;">AKTUALISIEREN</text></svg>
<div style="position:absolute;left:1709px;top:1327px;width:189px;height:55px;box-sizing:border-box;border:1px solid #a9a9a9;border-radius:5px;background:#c9c9c9;box-shadow:0 1px 2px rgba(0,0,0,.1);"></div>
<svg style="left:1733px;top:1345px" width="26" height="20" viewBox="0 0 26 20"><path d="M3 10.5 L9.5 17 L23.5 3" stroke="#f4f4f4" stroke-width="5" fill="none"/></svg>
<svg style="left:1767px;top:1341px" width="123" height="33"><text transform="translate(8.36,23.30) scale(0.8112,1)" font-size="22.08" font-weight="bold" fill="#f4f4f4" stroke="#f4f4f4" stroke-width="1.110" style="font-family:&quot;Liberation Sans&quot;,sans-serif;">SPEICHERN</text></svg>
</body></html>
